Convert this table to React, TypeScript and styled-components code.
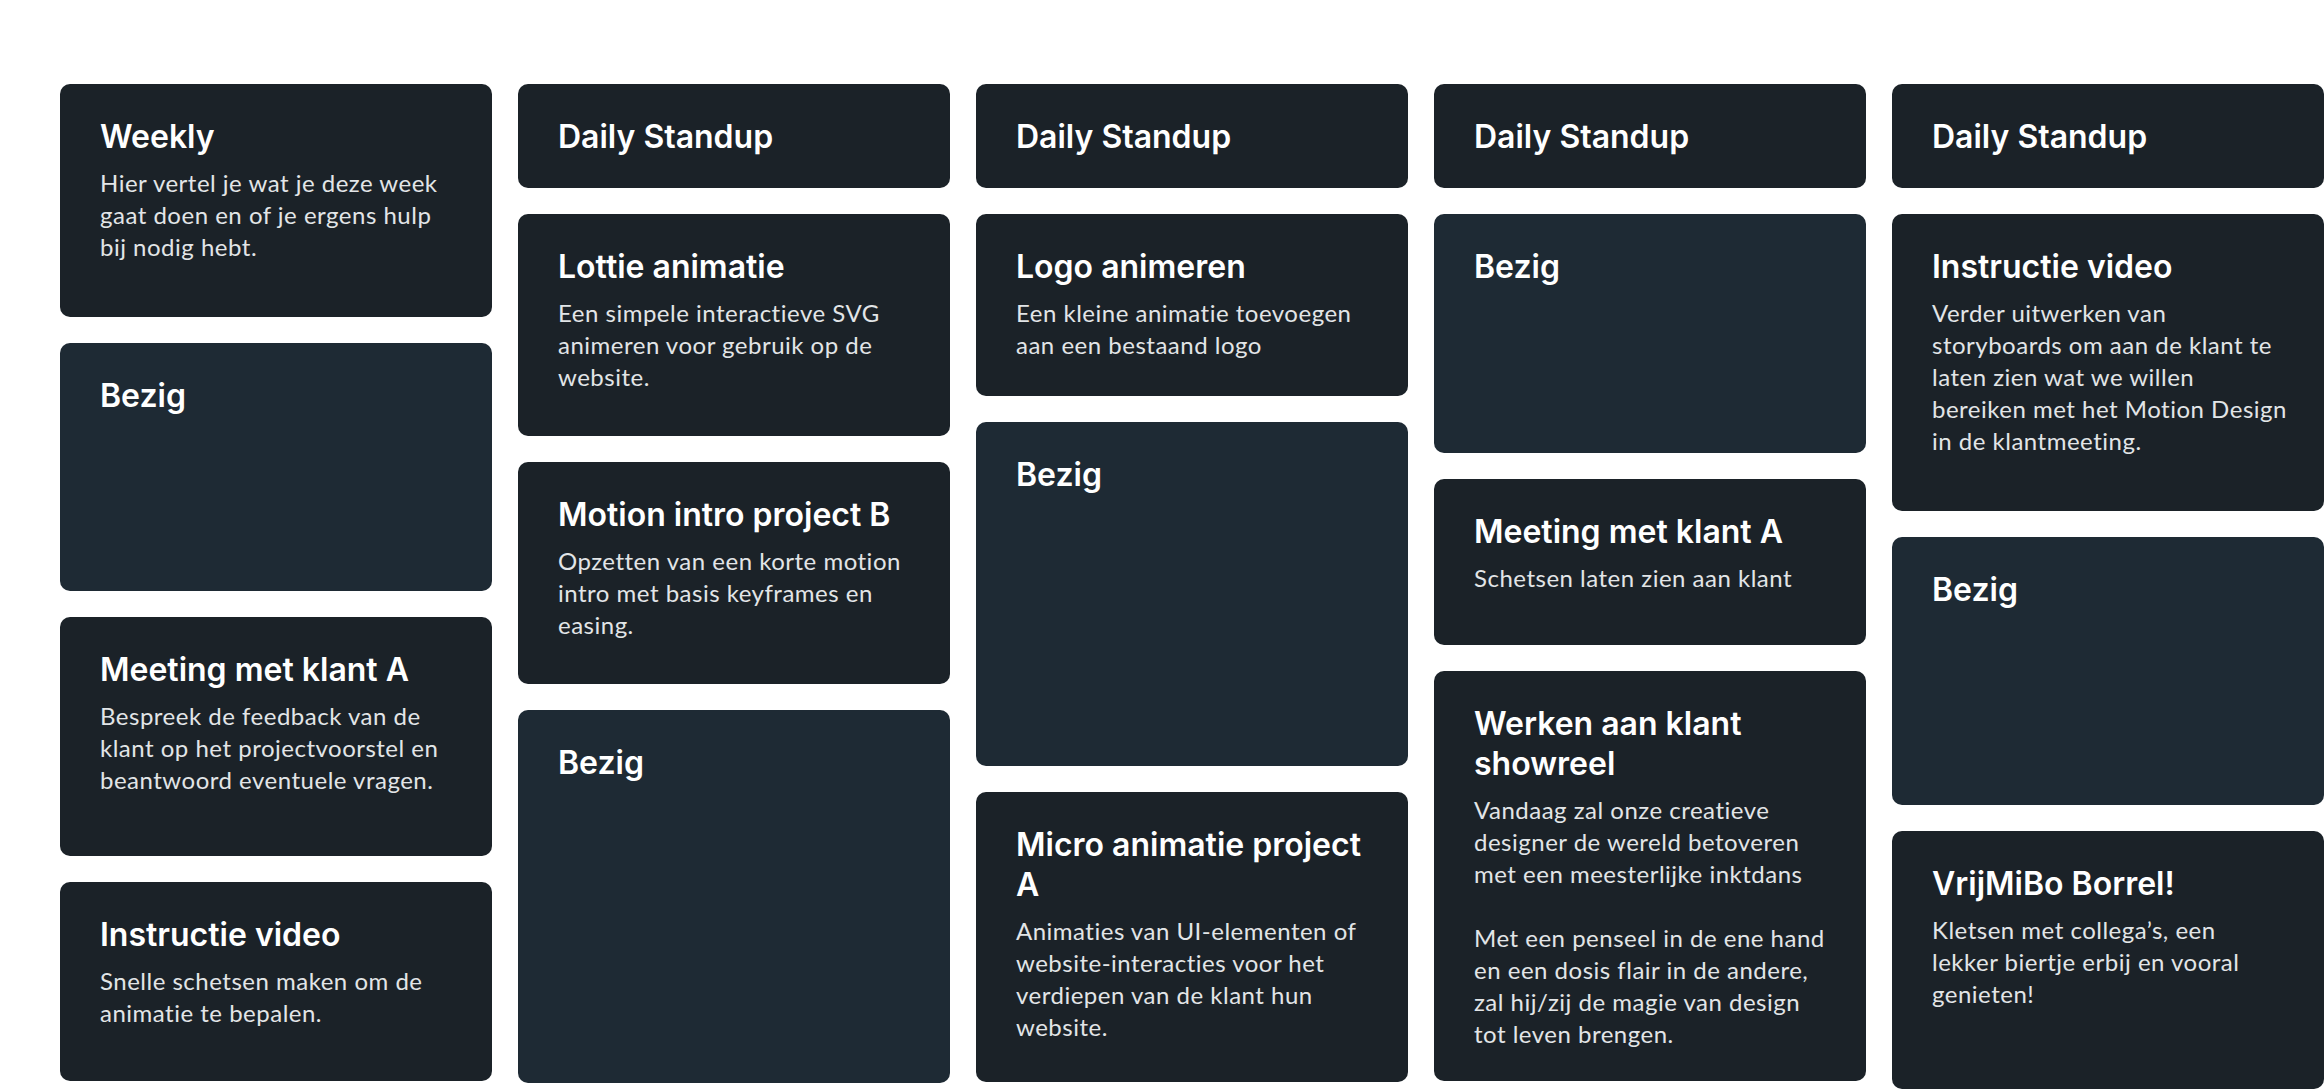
import styled, { createGlobalStyle } from 'styled-components';

type Task = {
  title: string;
  text?: string;
  height: number;
  busy?: boolean;
};

const columns: Task[][] = [
  [
    {
      title: 'Weekly',
      text: 'Hier vertel je wat je deze week\ngaat doen en of je ergens hulp\nbij nodig hebt.',
      height: 233,
    },
    { title: 'Bezig', height: 248, busy: true },
    {
      title: 'Meeting met klant A',
      text: 'Bespreek de feedback van de\nklant op het projectvoorstel en\nbeantwoord eventuele vragen.',
      height: 239,
    },
    {
      title: 'Instructie video',
      text: 'Snelle schetsen maken om de\nanimatie te bepalen.',
      height: 199,
    },
  ],
  [
    { title: 'Daily Standup', height: 104 },
    {
      title: 'Lottie animatie',
      text: 'Een simpele interactieve SVG\nanimeren voor gebruik op de\nwebsite.',
      height: 222,
    },
    {
      title: 'Motion intro project B',
      text: 'Opzetten van een korte motion\nintro met basis keyframes en\neasing.',
      height: 222,
    },
    { title: 'Bezig', height: 373, busy: true },
  ],
  [
    { title: 'Daily Standup', height: 104 },
    {
      title: 'Logo animeren',
      text: 'Een kleine animatie toevoegen\naan een bestaand logo',
      height: 182,
    },
    { title: 'Bezig', height: 344, busy: true },
    {
      title: 'Micro animatie project\nA',
      text: 'Animaties van UI-elementen of\nwebsite-interacties voor het\nverdiepen van de klant hun\nwebsite.',
      height: 290,
    },
  ],
  [
    { title: 'Daily Standup', height: 104 },
    { title: 'Bezig', height: 239, busy: true },
    {
      title: 'Meeting met klant A',
      text: 'Schetsen laten zien aan klant',
      height: 166,
    },
    {
      title: 'Werken aan klant\nshowreel',
      text:
        'Vandaag zal onze creatieve\ndesigner de wereld betoveren\nmet een meesterlijke inktdans\n\nMet een penseel in de ene hand\nen een dosis flair in de andere,\nzal hij/zij de magie van design\ntot leven brengen.',
      height: 410,
    },
  ],
  [
    { title: 'Daily Standup', height: 104 },
    {
      title: 'Instructie video',
      text: 'Verder uitwerken van\nstoryboards om aan de klant te\nlaten zien wat we willen\nbereiken met het Motion Design\nin de klantmeeting.',
      height: 297,
    },
    { title: 'Bezig', height: 268, busy: true },
    {
      title: 'VrijMiBo Borrel!',
      text: 'Kletsen met collega’s, een\nlekker biertje erbij en vooral\ngenieten!',
      height: 258,
    },
  ],
];

function App() {
  return (
    <>
      <GlobalStyle />
      <Board>
        {columns.map((tasks, i) => (
          <Column key={i}>
            {tasks.map((task, j) => (
              <Card key={j} $busy={task.busy} $h={task.height}>
                <Title>{task.title}</Title>
                {task.text && <Text>{task.text}</Text>}
              </Card>
            ))}
          </Column>
        ))}
      </Board>
    </>
  );
}

const GlobalStyle = createGlobalStyle`
  html, body {
    margin: 0;
    background: #ffffff;
    font-family: Lato, "Noto Sans", sans-serif;
  }
  body {
    width: 2324px;
    height: 1090px;
    overflow: hidden;
  }
`;

const Board = styled.main`
  display: flex;
  align-items: flex-start;
  gap: 26px;
  padding: 84px 0 0 60px;
`;

const Column = styled.section`
  display: flex;
  flex-direction: column;
  gap: 26px;
  width: 432px;
  flex-shrink: 0;
`;

const Card = styled.article<{ $busy?: boolean; $h: number }>`
  box-sizing: border-box;
  height: ${({ $h }) => $h}px;
  padding: 33px 40px 0;
  border-radius: 10px;
  background: ${({ $busy }) => ($busy ? '#1e2a34' : '#1b2228')};
`;

const Title = styled.h3`
  margin: 0;
  color: #ffffff;
  font-family: Inter, "Noto Sans", sans-serif;
  font-weight: 600;
  font-size: 32px;
  line-height: 40px;
  white-space: pre;
`;

const Text = styled.p`
  margin: 10px 0 0;
  color: #e2e5e7;
  font-family: Lato, "Noto Sans", sans-serif;
  font-size: 24px;
  line-height: 32px;
  letter-spacing: 0.5px;
  white-space: pre;
`;

export default App;
